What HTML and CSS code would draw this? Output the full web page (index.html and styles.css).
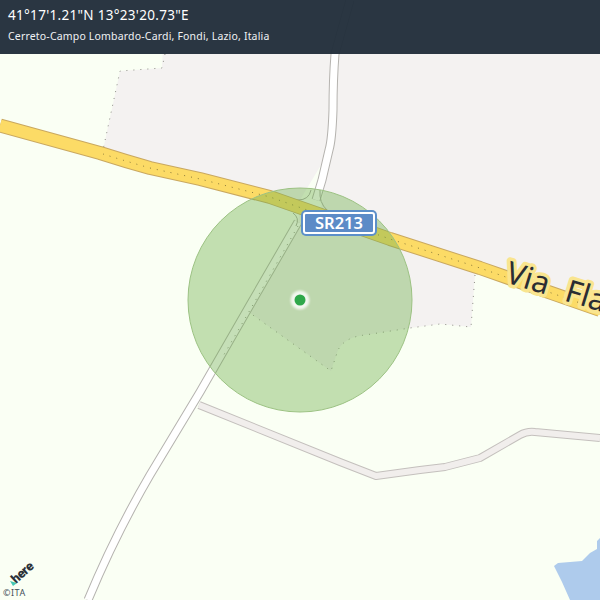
FILE: index.html
```html
<!DOCTYPE html>
<html lang="it">
<head>
<meta charset="utf-8">
<title>Cerreto-Campo Lombardo-Cardi</title>
<link rel="stylesheet" href="styles.css">
</head>
<body>
<main class="map">
  <svg class="tiles" width="600" height="600" viewBox="0 0 600 600">
    <path class="land" d="M165 0L162 68L120 71L103 150L150 168L200 179L270 197L390 239L480 268L475 275L471 327L440 324L410 328L365 335Q345 337 338 350L331 371L250 313L298 226L300 200L330 150L335 54L345 0Z"/>
    <path class="land" d="M345 0H600V306L480 268L390 239L320 215L330 150Z"/>
    <path class="water" d="M554 566L558 563L582 561L590 553L597 549L597 541L600 538V600H570L562 582Z"/>
    <g class="dots">
      <path d="M165 54L162 68L120 71L103 150"/>
      <path d="M475 275L471 327L440 324L410 328L365 335Q345 337 338 350L331 371L250 313"/>
    </g>
    <g class="minor">
      <path class="casing" d="M199 405L340 462L376 476L420 470L445 467L480 458L520 435Q527 431 535 432L600 438"/>
      <path class="fill" d="M199 405L340 462L376 476L420 470L445 467L480 458L520 435Q527 431 535 432L600 438"/>
    </g>
    <g class="local">
      <path class="casing" d="M350 0L335 54Q333 80 333 110Q332 140 329 150L322 180L316 200"/>
      <path class="casing" d="M298 222L250 305L200 392L150 475Q115 535 88 600"/>
      <path class="fill" d="M350 0L335 54Q333 80 333 110Q332 140 329 150L322 180L316 200"/>
      <path class="fill" d="M298 222L250 305L200 392L150 475Q115 535 88 600"/>
    </g>
    <path class="dots-road" d="M298 226L250 310L222 358"/>
    <g class="slips">
      <path d="M311 190Q309 200 298 200H284"/>
      <path d="M320 190Q319 203 327 210"/>
      <path d="M293 213Q300 218 296 226"/>
    </g>
    <path class="main-casing" d="M0 125.5L100 153Q125 161 150 168L200 179L270 197L390 239L480 268L600 310"/>
    <path class="main-fill" d="M0 125.5L100 153Q125 161 150 168L200 179L270 197L390 239L480 268L600 310"/>
    <path class="main-dots" d="M103 154Q125 161 150 168L200 179L270 197L390 239L480 268L600 310"/>
    <text class="road-label halo" transform="translate(504 282) rotate(17)">Via Fla</text>
    <text class="road-label" transform="translate(504 282) rotate(17)">Via Fla</text>
    <text class="here-logo" transform="translate(16 584) rotate(-42)">here</text>
    <path class="here-mark" d="M10 581L17 583L13 586Z"/>
  </svg>
  <svg class="accuracy" width="600" height="600" viewBox="0 0 600 600">
    <circle class="radius" cx="300" cy="300" r="112"/>
    <circle class="halo-dot" cx="300" cy="300" r="9.5"/>
    <circle class="dot" cx="300" cy="300" r="5.5"/>
  </svg>
  <div class="shield"><span class="shield-inner">SR213</span></div>
  <div class="copyright">©ITA</div>
  <header class="info">
    <div class="coords">41°17'1.21"N 13°23'20.73"E</div>
    <div class="place">Cerreto-Campo Lombardo-Cardi, Fondi, Lazio, Italia</div>
  </header>
</main>
</body>
</html>
```
FILE: styles.css
```css
* { box-sizing: border-box; }
html, body { margin: 0; padding: 0; }
body { width: 600px; height: 600px; overflow: hidden; font-family: "Noto Sans", "Roboto", sans-serif; }
.map { position: relative; width: 600px; height: 600px; background: #faFFF4; overflow: hidden; }
.tiles, .accuracy { position: absolute; left: 0; top: 0; display: block; }
.land { fill: #f4f2f1; }
.water { fill: #aecbec; }
.dots path, .dots-road { fill: none; stroke: #8d8d85; stroke-width: 1; stroke-dasharray: 1 6; }
.minor .casing { fill: none; stroke: #c4c0bd; stroke-width: 8; stroke-linejoin: round; }
.minor .fill { fill: none; stroke: #f1eeec; stroke-width: 6; stroke-linejoin: round; }
.local .casing { fill: none; stroke: #b5b3af; stroke-width: 9; stroke-linejoin: round; }
.local .fill { fill: none; stroke: #fff; stroke-width: 7; stroke-linejoin: round; }
.slips path { fill: none; stroke: #a9a7a3; stroke-width: 1; }
.main-casing { fill: none; stroke: #c9a860; stroke-width: 14; stroke-linejoin: round; }
.main-fill { fill: none; stroke: #fcdb66; stroke-width: 12; stroke-linejoin: round; }
.main-dots { fill: none; stroke: #8a7a3a; stroke-width: 1; stroke-dasharray: 1 6; }
.road-label { font-family: "Noto Sans", sans-serif; font-size: 31px; fill: #2a2d33; word-spacing: 10px; }
.road-label.halo { fill: none; stroke: #f9e58f; stroke-width: 7; stroke-linejoin: round; }
.here-logo { font-family: "Roboto", sans-serif; font-weight: 900; font-size: 13px; fill: #2b3138; letter-spacing: -0.4px; }
.here-mark { fill: #46c8b4; }
.radius { fill: #6eb04a; fill-opacity: 0.4; stroke: #9cc283; stroke-width: 1; }
.halo-dot { fill: #fff; fill-opacity: 0.8; filter: blur(1px); }
.dot { fill: #2fa84a; }
.shield { position: absolute; left: 301px; top: 210px; width: 76px; height: 26px; padding: 2px; background: #5c8fc9; border-radius: 5px; }
.shield-inner { display: flex; align-items: center; justify-content: center; width: 100%; height: 100%; padding: 1px; background: #5c8bc7; border: 2px solid #fff; border-radius: 3px; color: #fff; font-family: "Noto Sans", sans-serif; font-size: 16.5px; font-weight: 600; line-height: 1; }
.copyright { position: absolute; left: 3px; top: 587px; font-size: 9px; line-height: 11px; letter-spacing: 0.5px; color: #44505a; }
.info { position: absolute; left: 0; top: 0; width: 600px; height: 54px; padding: 7px 8px 0; background: rgba(35, 48, 60, 0.97); color: #fff; }
.coords { font-size: 13.5px; line-height: 17px; letter-spacing: 0.3px; }
.place { margin-top: 5px; font-size: 10.5px; line-height: 15px; letter-spacing: 0.18px; color: #f0f2f4; }
```
